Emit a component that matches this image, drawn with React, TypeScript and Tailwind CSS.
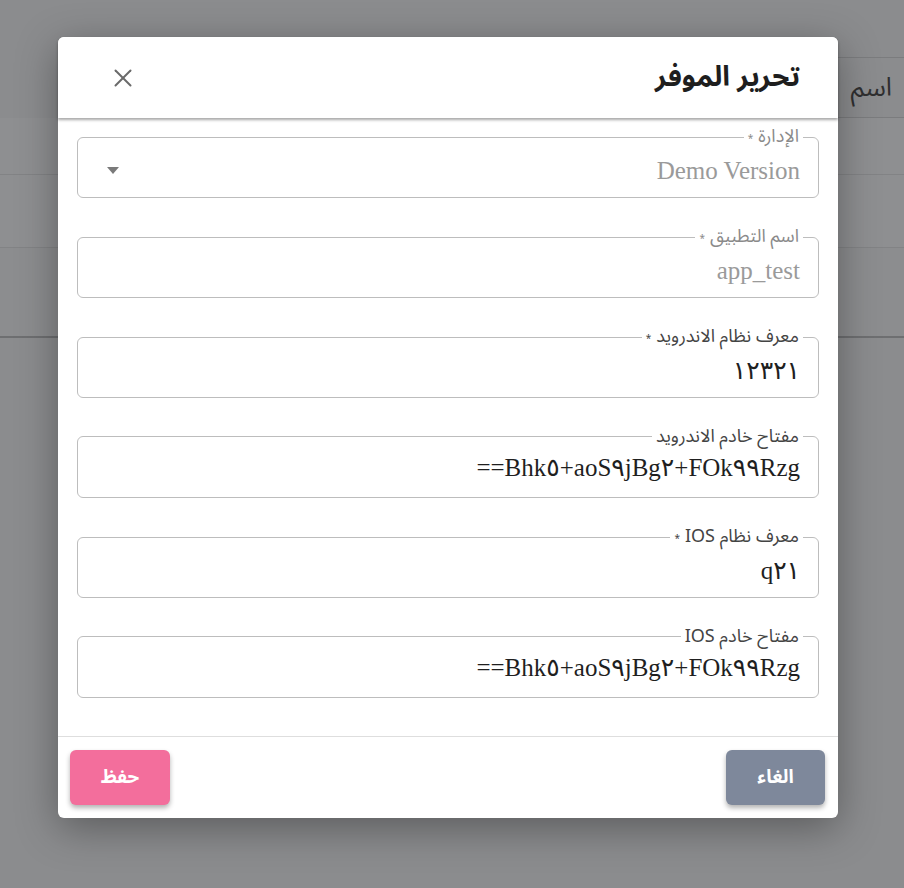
import { X } from "lucide-react";

const arabic = { fontFamily: '"Noto Sans Arabic", "DejaVu Sans", sans-serif' };
const serif = { fontFamily: '"Liberation Serif", "DejaVu Sans", serif' };

type Field = {
  label: string;
  value: string;
  required?: boolean;
  disabled?: boolean;
  select?: boolean;
};

const fields: Field[] = [
  { label: "الإدارة", value: "Demo Version", required: true, disabled: true, select: true },
  { label: "اسم التطبيق", value: "app_test", required: true, disabled: true },
  { label: "معرف نظام الاندرويد", value: "١٢٣٢١", required: true },
  { label: "مفتاح خادم الاندرويد", value: "==Bhk٥+aoS٩jBg٢+FOk٩٩Rzg" },
  { label: "معرف نظام IOS", value: "q٢١", required: true },
  { label: "مفتاح خادم IOS", value: "==Bhk٥+aoS٩jBg٢+FOk٩٩Rzg" },
];

function OutlinedField({ f }: { f: Field }) {
  return (
    <fieldset className="h-[70px] border border-[#bdbdbd] rounded-[6px] px-[15px] m-0 min-w-0">
      <legend
        className={`px-[4px] text-[18px] leading-[16px] ${f.disabled ? "text-[#8a8a8a]" : "text-[#444]"}`}
        style={arabic}
      >
        {f.label}
        {f.required && <span className="text-[10px] mr-[5px]">*</span>}
      </legend>
      <div className="h-[46px] flex items-center justify-between pr-[3px]">
        <span
          dir="ltr"
          className={`text-[25px] leading-none ${f.disabled ? "text-[#9a9a9a]" : "text-[#1f1f1f]"}`}
          style={serif}
        >
          {f.value}
        </span>
        {f.select && (
          <svg width="12" height="7" viewBox="0 0 12 7" className="ml-[14px]">
            <path d="M0 0h12L6 7z" fill="#7a7a7a" />
          </svg>
        )}
      </div>
    </fieldset>
  );
}

export default function App() {
  return (
    <div className="relative w-[904px] h-[888px] overflow-hidden bg-[#8b8c8e]" style={arabic}>
      {/* page behind the overlay */}
      <div dir="rtl" className="pt-[57px]">
        <div className="h-[61px] border-y border-[#7b7c7e] ml-[120px] flex items-center px-[12px] text-[26px] text-[#2f2f30]">
          اسم
        </div>
        <div className="h-[57px] border-b border-[#828385] bg-[#8e8f91]" />
        <div className="h-[73px] border-b border-[#828385] bg-[#8e8f91]" />
        <div className="h-[90px] border-b-2 border-[#6e6f71] bg-[#8c8d8f]" />
      </div>

      {/* modal */}
      <div
        dir="rtl"
        className="absolute left-[58px] top-[37px] w-[780px] h-[781px] bg-white rounded-[6px] shadow-[0_10px_40px_rgba(0,0,0,0.35)] flex flex-col"
      >
        <div className="h-[81px] shrink-0 flex items-center justify-between pr-[38px] pl-[50px] rounded-t-[6px] relative z-10 shadow-[0_2px_3px_rgba(0,0,0,0.35)] bg-white">
          <h2 className="text-[28px] font-bold text-[#1e1e1e]">
            تحرير الموفر
          </h2>
          <button className="text-[#6a6a6a]">
            <X size={30} strokeWidth={1.6} />
          </button>
        </div>

        <div className="flex-1 flex flex-col gap-[30px] px-[19px] pt-[10px]">
          {fields.map((f) => (
            <OutlinedField key={f.label} f={f} />
          ))}
        </div>

        <div className="h-[82px] shrink-0 border-t border-[#dedede] flex items-start justify-between pt-[13px] pr-[13px] pl-[12px]">
          <button className="w-[99px] h-[55px] rounded-[6px] bg-[#7e889b] text-white text-[19px] font-bold shadow-[0_3px_5px_rgba(0,0,0,0.3)]">
            الغاء
          </button>
          <button className="w-[100px] h-[55px] rounded-[6px] bg-[#f36e9c] text-white text-[19px] font-bold shadow-[0_3px_5px_rgba(0,0,0,0.3)]">
            حفظ
          </button>
        </div>
      </div>
    </div>
  );
}
